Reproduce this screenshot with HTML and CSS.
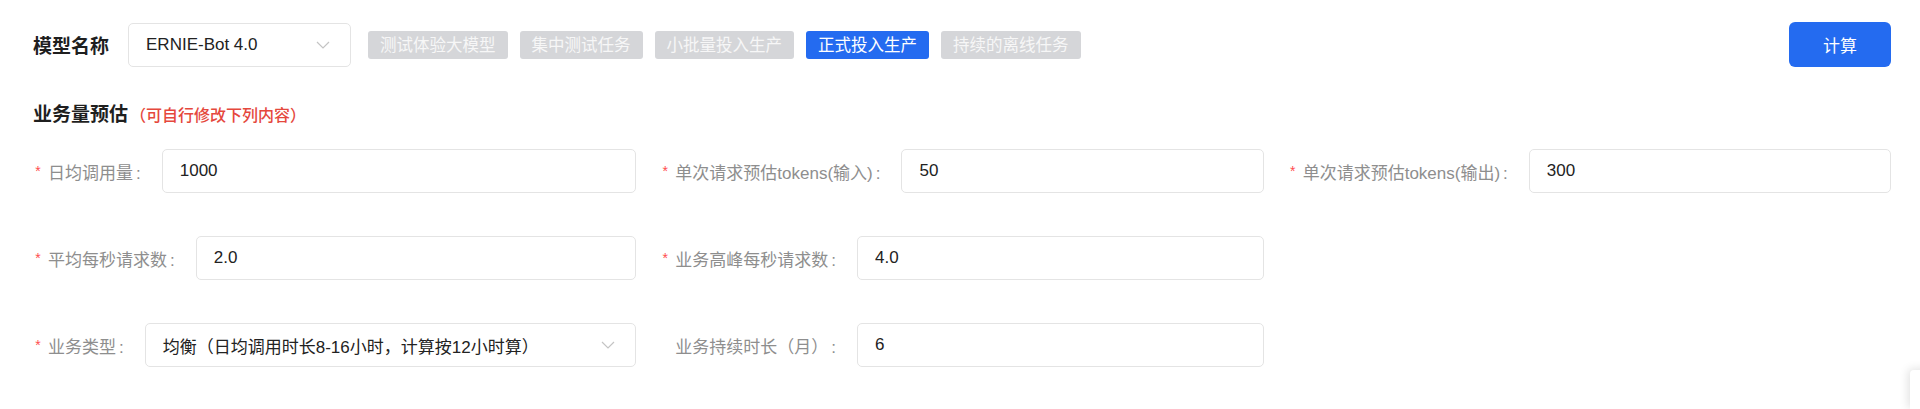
FILE: index.html
```html
<!DOCTYPE html>
<html lang="zh-CN">
<head>
    <meta charset="UTF-8">
    <meta name="viewport" content="width=device-width, initial-scale=1.0">
    <title>模型成本估算</title>
    <link rel="stylesheet" href="styles.css">
</head>
<body>
    <div class="page">
        <div class="toolbar">
            <span class="field-title">模型名称</span>
            <div class="select model-select">
                <span class="select-value">ERNIE-Bot 4.0</span>
                <svg class="chevron" width="14" height="8" viewBox="0 0 14 8"><path d="M1 1l6 6 6-6" fill="none" stroke="#c4c4c4" stroke-width="1.2"/></svg>
            </div>
            <div class="tags">
                <span class="tag">测试体验大模型</span>
                <span class="tag">集中测试任务</span>
                <span class="tag">小批量投入生产</span>
                <span class="tag active">正式投入生产</span>
                <span class="tag">持续的离线任务</span>
            </div>
            <button class="calc-button">计算</button>
        </div>

        <h3 class="section-title">业务量预估<span class="hint">（可自行修改下列内容）</span></h3>

        <form class="form-grid">
            <div class="form-item">
                <label class="form-label"><span class="star">*</span>日均调用量<span class="colon">:</span></label>
                <input class="text-input" type="text" value="1000">
            </div>
            <div class="form-item">
                <label class="form-label"><span class="star">*</span>单次请求预估tokens(输入)<span class="colon">:</span></label>
                <input class="text-input" type="text" value="50">
            </div>
            <div class="form-item">
                <label class="form-label"><span class="star">*</span>单次请求预估tokens(输出)<span class="colon">:</span></label>
                <input class="text-input" type="text" value="300">
            </div>

            <div class="form-item row-start">
                <label class="form-label"><span class="star">*</span>平均每秒请求数<span class="colon">:</span></label>
                <input class="text-input" type="text" value="2.0">
            </div>
            <div class="form-item">
                <label class="form-label"><span class="star">*</span>业务高峰每秒请求数<span class="colon">:</span></label>
                <input class="text-input" type="text" value="4.0">
            </div>

            <div class="form-item row-start">
                <label class="form-label"><span class="star">*</span>业务类型<span class="colon">:</span></label>
                <div class="select wide-select">
                    <span class="select-value">均衡（日均调用时长8-16小时，计算按12小时算）</span>
                    <svg class="chevron" width="14" height="8" viewBox="0 0 14 8"><path d="M1 1l6 6 6-6" fill="none" stroke="#c4c4c4" stroke-width="1.2"/></svg>
                </div>
            </div>
            <div class="form-item">
                <label class="form-label"><span class="star blank">*</span>业务持续时长（月）<span class="colon">:</span></label>
                <input class="text-input" type="text" value="6">
            </div>
        </form>
    </div>

    <div class="float-panel"></div>
</body>
</html>
```

FILE: styles.css
```css
body {
    margin: 0;
    height: 409px;
    background-color: #fff;
    font-family: "Liberation Sans", "Noto Sans CJK SC", sans-serif;
    color: #222;
    overflow: hidden;
    position: relative;
}

.page {
    padding: 22px 29px 0 33px;
}

.toolbar {
    display: flex;
    align-items: center;
    height: 45px;
}

.field-title {
    font-size: 19px;
    font-weight: 600;
    color: #1f1f1f;
    margin-right: 19px;
}

.select {
    display: flex;
    align-items: center;
    justify-content: space-between;
    box-sizing: border-box;
    height: 44px;
    padding: 0 20px 0 17px;
    border: 1px solid #e4e4e4;
    border-radius: 5px;
    font-size: 17px;
    color: #222;
    background: #fff;
}

.model-select {
    width: 223px;
}

.wide-select {
    flex: 1;
}

.chevron {
    flex: none;
}

.tags {
    display: flex;
    gap: 12px;
    margin-left: 17px;
}

.tag {
    height: 28px;
    line-height: 28px;
    padding: 0 12px;
    border-radius: 3px;
    background-color: #d5d6d9;
    color: #f7f7f7;
    font-size: 16.5px;
}

.tag.active {
    background-color: #246bf0;
    color: #fff;
}

.calc-button {
    margin-left: auto;
    width: 102px;
    height: 45px;
    border: none;
    border-radius: 6px;
    background-color: #246bf0;
    color: #fff;
    font-family: inherit;
    font-size: 17px;
    cursor: pointer;
}

.section-title {
    margin: 36px 0 0;
    height: 24px;
    line-height: 24px;
    font-size: 19px;
    font-weight: 600;
    color: #1f1f1f;
}

.hint {
    margin-left: 2px;
    font-size: 16px;
    font-weight: 500;
    color: #e5483d;
}

.form-grid {
    display: grid;
    grid-template-columns: repeat(3, 1fr);
    column-gap: 24px;
    row-gap: 43px;
    margin-top: 22px;
}

.row-start {
    grid-column: 1;
}

.form-item {
    display: flex;
    align-items: center;
    height: 44px;
}

.form-label {
    flex: none;
    font-size: 17px;
    color: #8e8e8e;
    margin-right: 21px;
    white-space: nowrap;
}

.star {
    display: inline-block;
    width: 10px;
    margin-right: 5px;
    color: #ff4d4f;
    font-size: 14px;
    vertical-align: 3px;
    text-align: center;
}

.star.blank {
    visibility: hidden;
}

.colon {
    margin-left: 3px;
}

.text-input {
    flex: 1;
    min-width: 0;
    box-sizing: border-box;
    height: 44px;
    padding: 0 17px;
    border: 1px solid #e4e4e4;
    border-radius: 5px;
    font-family: inherit;
    font-size: 17px;
    color: #222;
    outline: none;
}

.float-panel {
    position: absolute;
    left: 1910px;
    top: 370px;
    width: 40px;
    height: 39px;
    background: #fff;
    border-radius: 4px 0 0 0;
    box-shadow: -2px -1px 10px rgba(0, 0, 0, 0.12);
}
```
